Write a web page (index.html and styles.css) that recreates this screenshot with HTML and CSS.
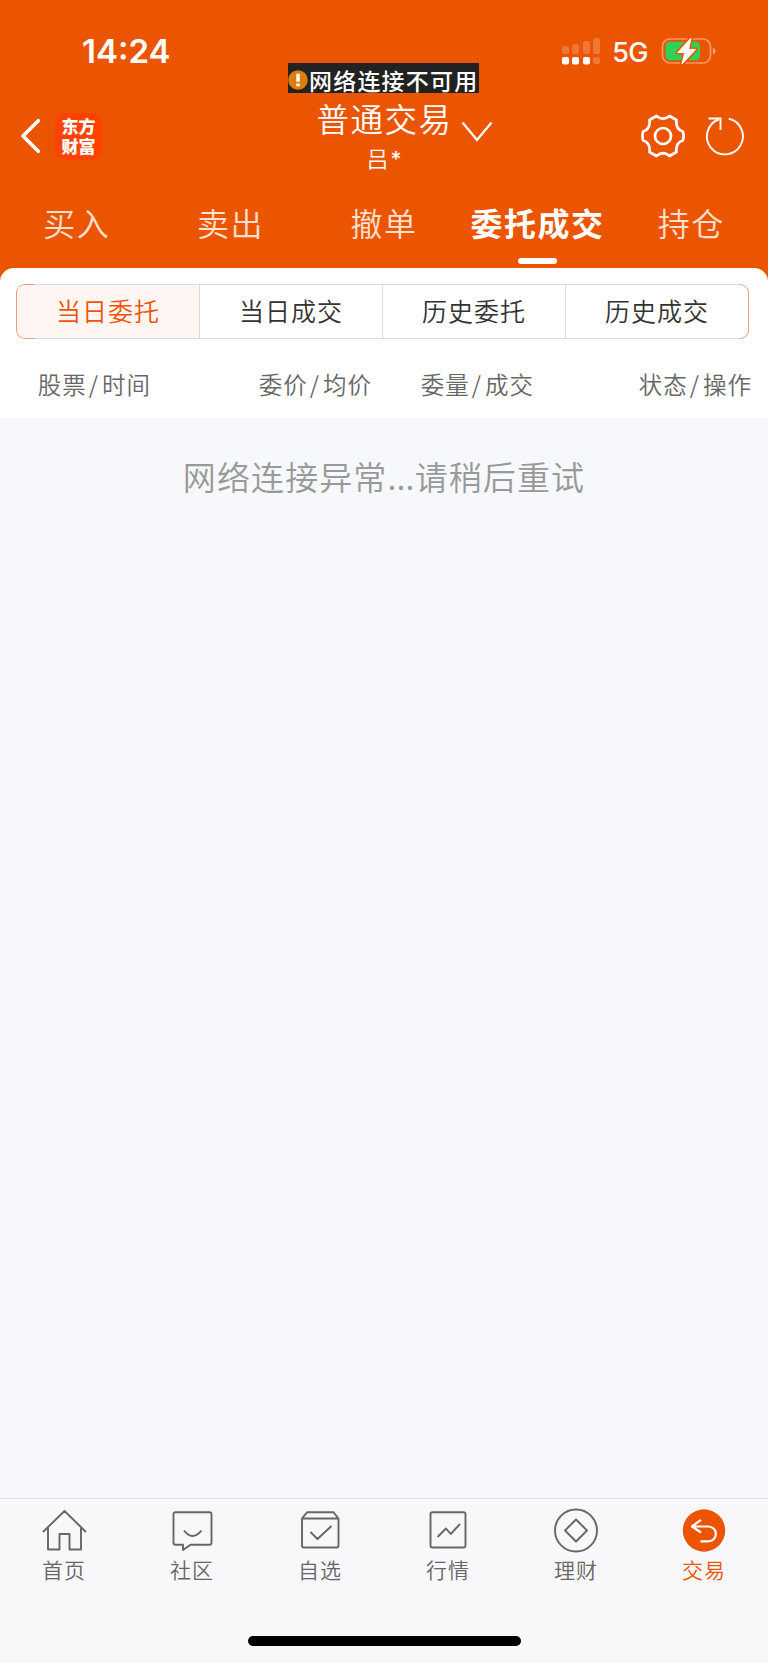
FILE: index.html
```
<!DOCTYPE html>
<html lang="zh-CN">

<head>
  <meta charset="utf-8">
  <title>普通交易</title>
  <link rel="stylesheet" href="styles.css">
</head>

<body>
  <header class="header">
    <div class="status-bar">
      <span class="time">14:24</span>
      <div class="status-icons">
        <svg class="signal" width="40" height="28" viewBox="0 0 40 28" fill="#fff">
          <g opacity=".2">
            <rect x="1" y="9" width="7" height="8" rx="2" />
            <rect x="11" y="7" width="7" height="10" rx="2" />
            <rect x="22" y="4" width="7" height="13" rx="2" />
            <rect x="32" y="1" width="7" height="16" rx="2" />
            <rect x="32" y="20" width="7" height="7" rx="2" />
          </g>
          <rect x="1" y="20" width="7" height="7.5" rx="2" />
          <rect x="11" y="20" width="7" height="7.5" rx="2" />
          <rect x="22" y="20" width="7" height="7.5" rx="2" />
        </svg>
        <span class="network">5G</span>
        <svg class="battery" width="56" height="28" viewBox="0 0 56 28">
          <rect x="1.5" y="2" width="48" height="24" rx="7.5" fill="none" stroke="#fff" stroke-opacity=".4" stroke-width="1.7" />
          <path d="M52 10.500q2.500 1 2.500 3.500t-2.500 3.500z" fill="#fff" opacity=".5" />
          <rect x="4.500" y="4.800" width="34.500" height="18.400" rx="4.500" fill="#30d158" />
          <path d="M30 1.200L16.600 15.500h7.200L21 27 34.700 12.400h-7.200z" fill="#fff" stroke="#eb5502" stroke-width="4" stroke-linejoin="round" />
          <path d="M30 1.200L16.600 15.500h7.200L21 27 34.700 12.400h-7.200z" fill="#fff" stroke="#fff" stroke-linejoin="round" />
        </svg>
      </div>
    </div>
    <div class="notice">
      <svg width="20" height="20" viewBox="0 0 20 20">
        <circle cx="10" cy="10" r="9.800" fill="#da800a" />
        <path d="M8.300 3.800h3.400v8H8.300zM8.300 13.500h3.400v2.700H8.300z" fill="#fff" />
      </svg>
      <span>网络连接不可用</span>
    </div>
    <div class="nav-bar">
      <div class="nav-left">
        <svg width="22" height="36" viewBox="0 0 22 36" fill="none" stroke="#fff" stroke-width="3.700" stroke-linecap="round" stroke-linejoin="round">
          <path d="M18.300 2.800L3 18l15.300 15.200" />
        </svg>
        <div class="logo">东方<br>财富</div>
      </div>
      <div class="title">
        <h1>普通交易</h1>
        <p>吕<i>*</i></p>
        <svg class="arrow" width="32" height="22" viewBox="0 0 32 22" fill="none" stroke="#fff" stroke-width="2.300">
          <path d="M1.500 1.500L16 19 30.500 1.500" />
        </svg>
      </div>
      <div class="nav-right">
        <svg width="44" height="44" viewBox="0 0 44 44" fill="none" stroke="#fff" stroke-width="2.700" stroke-linejoin="round">
          <path d="M15.400 2 Q22 7.500 28.600 2 L35.500 6 Q34.500 15.500 41.800 17.500 Q43.400 22 41.800 26.500 Q34.500 28.500 35.500 38 L28.600 42 Q22 36.500 15.400 42 L8.500 38 Q9.500 28.500 2.200 26.500 Q.600 22 2.200 17.500 Q9.500 15.500 8.500 6 Z" />
          <circle cx="22" cy="22" r="8" />
        </svg>
        <svg width="40" height="40" viewBox="0 0 40 40" fill="none" stroke="#fff" stroke-width="1.900">
          <path d="M23.800 2.800A18 18 0 1 1 13.700 3.500M3.500 2.500H15.500V14" />
        </svg>
      </div>
    </div>
    <nav class="tabs">
      <a>买入</a>
      <a>卖出</a>
      <a>撤单</a>
      <a class="active">委托成交</a>
      <a>持仓</a>
    </nav>
  </header>

  <section class="panel">
    <div class="segment">
      <a class="active">当日委托</a>
      <a>当日成交</a>
      <a>历史委托</a>
      <a>历史成交</a>
    </div>
    <div class="list-head">
      <span>股票<i>/</i>时间</span>
      <span>委价<i>/</i>均价</span>
      <span>委量<i>/</i>成交</span>
      <span>状态<i>/</i>操作</span>
    </div>
  </section>

  <main class="content">
    <p class="empty">网络连接异常<i>...</i>请稍后重试</p>
  </main>

  <footer class="footer">
    <nav class="tab-bar">
      <a>
        <svg width="46" height="46" viewBox="0 0 46 46">
          <path d="M2 24L23.500 3 45 24M7 20v21.500h11.500V26h10v15.500H40V20" />
        </svg>
        <span>首页</span>
      </a>
      <a>
        <svg width="46" height="46" viewBox="0 0 46 46">
          <path d="M6.500 4.300h34a2 2 0 0 1 2 2v28.500a2 2 0 0 1-2 2H21.500L14 42v-5.200H6.500a2 2 0 0 1-2-2V6.300a2 2 0 0 1 2-2zM15 22.500q8.500 11 17.500 0" />
        </svg>
        <span>社区</span>
      </a>
      <a>
        <svg width="46" height="46" viewBox="0 0 46 46">
          <path d="M5 10.500L10 4.300h26.500l5 6.200v27a2 2 0 0 1-2 2H7a2 2 0 0 1-2-2zh36.500M13.500 24l7 7L34.500 18" />
        </svg>
        <span>自选</span>
      </a>
      <a>
        <svg width="46" height="46" viewBox="0 0 46 46">
          <rect x="5.500" y="4.300" width="35" height="35.200" rx="2" />
          <path d="M12.500 29l8.500-8.500 4.700 5.500L35 16" />
        </svg>
        <span>行情</span>
      </a>
      <a>
        <svg width="46" height="46" viewBox="0 0 46 46">
          <circle cx="23" cy="22.500" r="21" />
          <path d="M23 11.500l11 11-11 11-11-11z" />
        </svg>
        <span>理财</span>
      </a>
      <a class="active">
        <svg width="46" height="46" viewBox="0 0 46 46">
          <circle class="fill" cx="23" cy="22.500" r="21.200" />
          <path class="back" d="M20 11.800l-9 6.700 9 6M11 18.500h16c10.500 0 10.500 14.800 0 14.800h-7.500" />
        </svg>
        <span>交易</span>
      </a>
    </nav>
    <div class="home-bar"></div>
  </footer>
</body>

</html>
```

FILE: styles.css
```
* {
  box-sizing: border-box;
}

body {
  display: flex;
  flex-direction: column;
  height: 1663px;
  margin: 0;
  background-color: #f6f8fb;
  font-family: "Noto Sans CJK SC", sans-serif;
  font-weight: 350;
}

h1,
p {
  margin: 0;
}

i {
  font-style: normal;
}

svg {
  display: block;
  flex: none;
}
/* header */

.header {
  position: relative;
  height: 281px;
  background-color: #eb5502;
  color: #fff;
}

.status-bar {
  display: flex;
  justify-content: space-between;
  align-items: center;
  height: 102px;
  padding: 0 51px 0 82px;
  font-family: Inter, sans-serif;
}

.time {
  font-size: 33px;
  font-weight: 600;
}

.status-icons {
  display: flex;
  align-items: center;
}

.network {
  margin: 3px 13px 0 11px;
  font-size: 27px;
  font-weight: 500;
  letter-spacing: -.5px;
}

.notice {
  position: absolute;
  top: 63px;
  left: 288px;
  display: flex;
  align-items: center;
  width: 191px;
  height: 30px;
  background-color: #222;
  font-size: 23px;
  font-weight: 500;
  line-height: 30px;
  letter-spacing: 1.2px;
  white-space: nowrap;
}

.notice svg {
  margin-top: 3px;
}

.notice span {
  margin: 3px 0 0 1px;
}

.nav-bar {
  display: grid;
  grid-template-rows: 68px;
  grid-template-columns: 1fr auto 1fr;
  align-items: center;
  height: 68px;
  padding: 0 23px 0 20px;
}

.nav-left,
.nav-right {
  display: flex;
  align-items: center;
}

.nav-left {
  gap: 13px;
}

.nav-right {
  justify-content: flex-end;
  gap: 20px;
}

.logo {
  width: 47px;
  height: 47px;
  padding-top: 3px;
  border-radius: 10px;
  background-color: #ff4200;
  font-size: 17px;
  font-weight: 900;
  line-height: 20px;
  text-align: center;
}

.title {
  position: relative;
  text-align: center;
}

.title h1 {
  margin: -3px 0 1px 4px;
  font-size: 32.500px;
  font-weight: 350;
  line-height: 44px;
  letter-spacing: 1.5px;
}

.title p {
  padding-left: 3px;
  font-size: 22px;
  line-height: 33px;
}

.title p i {
  display: inline-block;
  margin-left: 2px;
  font-family: Inter, sans-serif;
  font-size: 21px;
  font-weight: 500;
  line-height: 20px;
}

.arrow {
  position: absolute;
  top: 22px;
  left: 149px;
}

.tabs {
  display: flex;
  height: 98px;
}

.tabs a {
  position: relative;
  flex: 1;
  color: #ffe0cf;
  font-size: 32px;
  line-height: 105px;
  letter-spacing: 1.5px;
  text-align: center;
  white-space: nowrap;
}

.tabs .active {
  color: #fff;
  font-weight: 700;
}

.tabs .active::after {
  content: "";
  position: absolute;
  top: 88px;
  left: 50%;
  width: 39px;
  height: 6px;
  margin-left: -20px;
  border-radius: 3px;
  background-color: #fff;
}
/* panel */

.panel {
  position: relative;
  height: 150px;
  margin-top: -13px;
  padding: 16px 19px 0 16px;
  border-radius: 14px 14px 0 0;
  background-color: #fff;
}

.segment {
  display: flex;
  height: 55px;
  border: 1px solid transparent;
  border-radius: 9px;
  background:
    linear-gradient(#fff, #fff) padding-box,
    linear-gradient(90deg, #ee9a78 0 17px, #d8dbe2 20px calc(100% - 11px), #ee9a78 calc(100% - 8px)) border-box;
}

.segment a {
  flex: 1;
  color: #333;
  font-size: 25px;
  line-height: 51px;
  letter-spacing: 1px;
  text-align: center;
}

.segment a + a {
  border-left: 1px solid #d8dbe2;
}

.segment .active {
  border-radius: 8px 0 0 8px;
  background-color: #fff5f2;
  color: #eb5502;
}

.list-head {
  display: grid;
  grid-template-columns: 116px 221px 162px 1fr;
  margin-right: -3px;
  padding-left: 19px;
  color: #666;
  font-size: 23.500px;
  line-height: 91px;
  letter-spacing: 1px;
  text-align: right;
  white-space: nowrap;
}

.list-head i {
  margin: 0 3px 0 2px;
}
/* content */

.content {
  flex: 1;
}

.empty {
  color: #999;
  font-size: 33px;
  line-height: 48px;
  letter-spacing: 1.1px;
  margin-top: 34px;
  text-align: center;
}

.empty i {
  letter-spacing: .2px;
}
/* footer */

.footer {
  height: 165px;
  border-top: 1px solid #dfe1e4;
  background-color: #f8f8fb;
}

.tab-bar {
  display: flex;
  height: 137px;
  padding-top: 9px;
}

.tab-bar a {
  display: flex;
  flex: 1;
  flex-direction: column;
  align-items: center;
  color: #666;
  font-size: 21px;
  line-height: 30px;
  letter-spacing: 1px;
}

.tab-bar svg {
  fill: none;
  stroke: #666;
  stroke-width: 1.900;
  stroke-linejoin: round;
}

.tab-bar .active {
  color: #eb5502;
}

.tab-bar .fill {
  fill: #eb5502;
  stroke: none;
}

.tab-bar .back {
  stroke: #fff;
  stroke-width: 2.200;
}

.home-bar {
  width: 273px;
  height: 10px;
  margin: 0 auto;
  border-radius: 5px;
  background-color: #000;
}
```
